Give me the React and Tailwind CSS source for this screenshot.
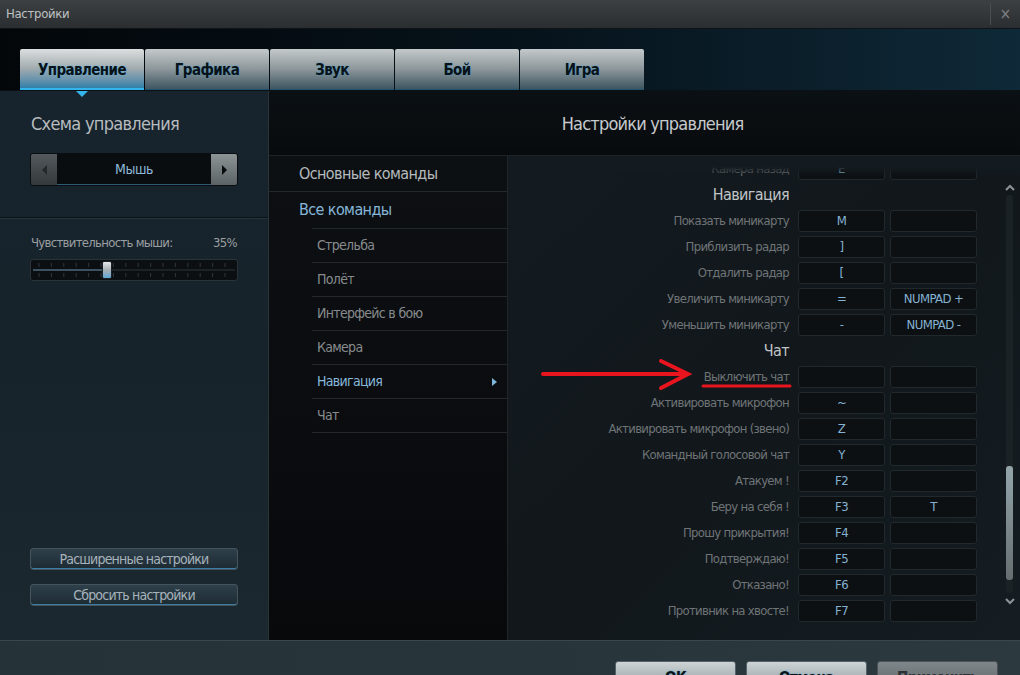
import React from 'react';

const tabs = ['Управление', 'Графика', 'Звук', 'Бой', 'Игра'];

const navSub = ['Стрельба', 'Полёт', 'Интерфейс в бою', 'Камера', 'Навигация', 'Чат'];

const rows = [
    { label: 'Камера назад', k1: 'E', k2: '' },
    { header: 'Навигация' },
    { label: 'Показать миникарту', k1: 'M', k2: '' },
    { label: 'Приблизить радар', k1: ']', k2: '' },
    { label: 'Отдалить радар', k1: '[', k2: '' },
    { label: 'Увеличить миникарту', k1: '=', k2: 'NUMPAD +' },
    { label: 'Уменьшить миникарту', k1: '-', k2: 'NUMPAD -' },
    { header: 'Чат' },
    { label: 'Выключить чат', k1: '', k2: '' },
    { label: 'Активировать микрофон', k1: '~', k2: '' },
    { label: 'Активировать микрофон (звено)', k1: 'Z', k2: '' },
    { label: 'Командный голосовой чат', k1: 'Y', k2: '' },
    { label: 'Атакуем !', k1: 'F2', k2: '' },
    { label: 'Беру на себя !', k1: 'F3', k2: 'T' },
    { label: 'Прошу прикрытия!', k1: 'F4', k2: '' },
    { label: 'Подтверждаю!', k1: 'F5', k2: '' },
    { label: 'Отказано!', k1: 'F6', k2: '' },
    { label: 'Противник на хвосте!', k1: 'F7', k2: '' },
];

function KeyBox({ value }) {
    return (
        <div className="w-[87px] h-[22px] flex items-center justify-center rounded-[3px] border border-[#22292d] bg-[#0c1013] text-[13px] tracking-[-0.6px] text-[#86b2d2]">
            {value}
        </div>
    );
}

function Tab({ title, active }) {
    return (
        <div
            className={
                active
                    ? 'w-[124px] h-[41px] pt-[3px] flex items-center justify-center rounded-t-[2px] bg-gradient-to-b from-[#dcdfdf] via-[#a2abaf] to-[#2f7fa8] border-b-2 border-[#35b4ec] text-[15px] tracking-[-0.6px] font-bold text-[#0a1217] [text-shadow:0_0_2px_#4fb4e6]'
                    : 'w-[124px] h-[41px] pt-[3px] flex items-center justify-center rounded-t-[2px] bg-gradient-to-b from-[#c4c9cb] via-[#8d979b] to-[#3e5662] border-b border-[#1f5570] text-[15px] tracking-[-0.6px] font-bold text-[#0a1217] [text-shadow:0_0_2px_#4aa0cc]'
            }
        >
            {title}
        </div>
    );
}

function Slider() {
    const ticks = [];
    for (let x = 8; x < 206; x += 12.4) ticks.push(x);
    return (
        <div className="relative mx-[30px] mt-[6px] h-[22px] rounded-[3px] border border-[#2a3338] bg-[#0b0f12]">
            <svg width="206" height="20" className="absolute left-0 top-0">
                {ticks.map((x, i) => (
                    <g key={i} stroke="#2e373c" strokeWidth="1">
                        <line x1={x} y1="3" x2={x} y2="7" />
                        <line x1={x} y1="13" x2={x} y2="17" />
                    </g>
                ))}
                <line x1="2" y1="10" x2="72" y2="10" stroke="#3d5260" strokeWidth="2" />
                <line x1="80" y1="10" x2="204" y2="10" stroke="#1b2327" strokeWidth="2" />
            </svg>
            <div className="absolute left-[71px] top-[1px] w-[10px] h-[18px] rounded-[2px] bg-gradient-to-b from-[#e4e8ea] via-[#a8b0b4] to-[#5aa6d6] border border-[#1a2024]" />
        </div>
    );
}

function PanelButton({ children }) {
    return (
        <div className="mx-[30px] h-[22px] flex items-center justify-center rounded-[3px] border border-[#44535c] bg-gradient-to-b from-[#2e404b] to-[#1d2a32] shadow-[inset_0_-1px_0_#3c7ea3] text-[14px] tracking-[-0.8px] text-[#a6b3bb]">
            {children}
        </div>
    );
}

function BottomButton({ children, disabled }) {
    return (
        <div
            className={
                disabled
                    ? 'w-[121px] h-[30px] pt-[5px] flex justify-center rounded-t-[3px] border border-[#4b5356] bg-gradient-to-b from-[#7f878a] to-[#5c6467] text-[15px] tracking-[-0.5px] font-bold text-[#2b3134]'
                    : 'w-[121px] h-[30px] pt-[5px] flex justify-center rounded-t-[3px] border border-[#55616a] bg-gradient-to-b from-[#cfd4d5] to-[#8b979c] text-[15px] tracking-[-0.5px] font-bold text-[#0c1418] [text-shadow:0_0_2px_#4aa0cc]'
            }
        >
            {children}
        </div>
    );
}

export default function App() {
    return (
        <div className="relative w-[1020px] h-[675px] overflow-hidden flex flex-col bg-[#0b0f12] font-['Liberation_Sans_Narrow','DejaVu_Sans_Condensed','Roboto',sans-serif]">
            {/* title bar */}
            <div className="h-[29px] flex items-center justify-between bg-gradient-to-b from-[#3d4043] to-[#2b2e31] border-b border-[#111416]">
                <span className="pl-[6px] text-[13px] tracking-[-0.3px] text-[#bfc1c2]">Настройки</span>
                <div className="flex items-center h-full">
                    <div className="w-px h-[22px] bg-[#22262a] border-r border-[#4a4e52]" />
                    <span className="w-[29px] text-center text-[15px] text-[#7d8184]">×</span>
                </div>
            </div>

            {/* tabs */}
            <div className="h-[62px] flex items-end pl-[20px] gap-px bg-gradient-to-r from-[#03070a] via-[#06121a] to-[#0f2938] border-b border-[#0a1014]">
                {tabs.map((t, i) => (
                    <Tab key={t} title={t} active={i === 0} />
                ))}
            </div>

            {/* body */}
            <div className="flex-1 flex min-h-0">
                {/* left panel */}
                <div className="relative w-[269px] flex flex-col border-r border-[#2a3338] bg-gradient-to-b from-[#17242d] via-[#16232b] to-[#1b282f]">
                    <div className="absolute left-[76px] top-0 w-0 h-0 border-l-[6px] border-r-[6px] border-t-[6px] border-l-transparent border-r-transparent border-t-[#35b4ec]" />
                    <div className="pl-[31px] pt-[19px] text-[18px] tracking-[-0.7px] text-[#b7bcbf]">Схема управления</div>
                    <div className="mx-[30px] mt-[16px] h-[33px] flex rounded-[3px] overflow-hidden border border-[#0a0e10]">
                        <div className="w-[26px] flex items-center justify-center bg-gradient-to-b from-[#53595c] to-[#34393c]">
                            <div className="w-0 h-0 border-t-[5px] border-b-[5px] border-r-[5px] border-t-transparent border-b-transparent border-r-[#23282b]" />
                        </div>
                        <div className="flex-1 flex items-center justify-center bg-[#0a0d10] border-b border-[#2d5a74] text-[14px] tracking-[-0.5px] text-[#8cb9d9]">Мышь</div>
                        <div className="w-[26px] flex items-center justify-center bg-gradient-to-b from-[#8d9496] to-[#5b6366]">
                            <div className="w-0 h-0 border-t-[5px] border-b-[5px] border-l-[5px] border-t-transparent border-b-transparent border-l-[#080a0c]" />
                        </div>
                    </div>
                    <div className="mt-[31px] h-[2px] border-t border-[#0c1317] border-b border-b-[#26343c]" />
                    <div className="mt-[14px] mx-[31px] flex justify-between text-[13px] tracking-[-0.7px] text-[#9b9fa1]">
                        <span>Чувствительность мыши:</span>
                        <span>35%</span>
                    </div>
                    <Slider />
                    <div className="flex-1" />
                    <PanelButton>Расширенные настройки</PanelButton>
                    <div className="h-[14px]" />
                    <PanelButton>Сбросить настройки</PanelButton>
                    <div className="h-[34px]" />
                </div>

                {/* right side */}
                <div className="flex-1 flex flex-col min-w-0">
                    <div className="h-[64px] flex items-center justify-center pl-[16px] bg-gradient-to-b from-[#0b1014] to-[#080b0e] text-[18px] tracking-[-0.8px] text-[#c6cacc]">
                        Настройки управления
                    </div>
                    <div className="flex-1 flex min-h-0 border-t border-[#1d2429]">
                        {/* nav */}
                        <div className="w-[239px] flex flex-col bg-gradient-to-b from-[#0d1013] to-[#08090b] border-r border-[#1f2529]">
                            <div className="h-[36px] flex items-center pl-[30px] border-b border-[#22282c] text-[16px] tracking-[-0.6px] text-[#b5babd]">Основные команды</div>
                            <div className="h-[36px] flex items-center pl-[30px] text-[16px] tracking-[-0.6px] text-[#86b6d8]">Все команды</div>
                            <div className="ml-[43px]">
                                {navSub.map((n) => (
                                    <div key={n} className="h-[34px] flex items-center justify-between pl-[5px] pr-[10px] border-t border-[#22282c] text-[14px] tracking-[-0.7px]">
                                        <span className={n === 'Навигация' ? 'text-[#88b8da]' : 'text-[#878b8e]'}>{n}</span>
                                        {n === 'Навигация' && (
                                            <div className="w-0 h-0 border-t-[4px] border-b-[4px] border-l-[5px] border-t-transparent border-b-transparent border-l-[#7fb4da]" />
                                        )}
                                    </div>
                                ))}
                                <div className="border-t border-[#22282c]" />
                            </div>
                        </div>

                        {/* list */}
                        <div className="relative flex-1 flex bg-gradient-to-br from-[#141b20] via-[#11171b] to-[#151d22]">
                            <div className="flex-1 overflow-hidden">
                                {rows.map((r, i) =>
                                    r.header ? (
                                        <div key={i} className="h-[26px] flex items-center justify-end pr-[188px] text-[16px] tracking-[-0.6px] text-[#c0c4c6]">
                                            {r.header}
                                        </div>
                                    ) : (
                                        <div key={i} className="h-[26px] flex items-center justify-end">
                                            <span className="pr-[9px] text-[13px] tracking-[-0.7px] text-[#6f7477]">{r.label}</span>
                                            <KeyBox value={r.k1} />
                                            <div className="w-[5px]" />
                                            <KeyBox value={r.k2} />
                                        </div>
                                    )
                                )}
                            </div>
                            <div className="w-[43px] flex flex-col items-center pl-[22px] pt-[28px]">
                                <svg width="10" height="7" viewBox="0 0 10 7">
                                    <path d="M1 6 L5 2 L9 6" stroke="#8d9497" strokeWidth="2" fill="none" />
                                </svg>
                                <div className="mt-[4px] w-[7px] h-[398px] flex flex-col justify-end rounded-[3px] bg-[#1b2226] pb-[13px]">
                                    <div className="h-[114px] rounded-[3px] bg-gradient-to-b from-[#94a6aa] to-[#666e71]" />
                                </div>
                                <svg width="10" height="7" viewBox="0 0 10 7" className="mt-[5px]">
                                    <path d="M1 1 L5 5 L9 1" stroke="#8d9497" strokeWidth="2" fill="none" />
                                </svg>
                            </div>
                            <div className="absolute left-0 right-0 top-0 h-[20px] bg-gradient-to-b from-[#141b20] from-55% to-transparent" />
                        </div>
                    </div>
                </div>
            </div>

            {/* bottom bar */}
            <div className="h-[35px] flex items-end justify-end pr-[22px] border-t border-[#3a474e] bg-gradient-to-r from-[#253238] via-[#27343a] to-[#2c393f]">
                <div className="flex gap-[10px] -mb-[16px]">
                    <BottomButton>OK</BottomButton>
                    <BottomButton>Отмена</BottomButton>
                    <BottomButton disabled>Применить</BottomButton>
                </div>
            </div>

            {/* red annotation */}
            <svg className="absolute left-0 top-0 pointer-events-none" width="1020" height="675">
                <g stroke="#e8141e" strokeWidth="4" fill="none" strokeLinecap="round">
                    <line x1="543" y1="374" x2="686" y2="374" />
                    <polyline points="661,361 688,374 661,388" />
                </g>
                <line x1="703" y1="386" x2="790" y2="386" stroke="#e8141e" strokeWidth="3" strokeLinecap="round" />
            </svg>
        </div>
    );
}
